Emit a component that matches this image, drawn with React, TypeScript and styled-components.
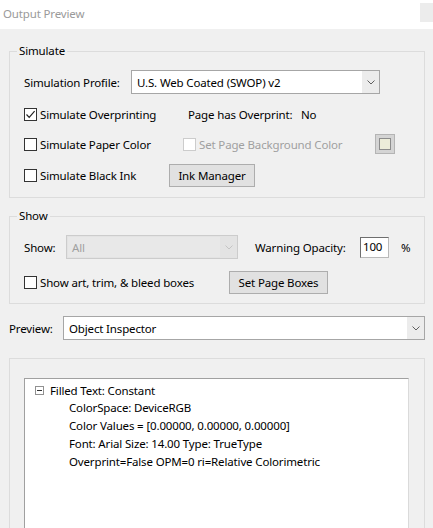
import React from "react";
import styled, { createGlobalStyle } from "styled-components";

const GlobalStyle = createGlobalStyle`
    html, body {
        margin: 0;
        padding: 0;
        background: #f0f0f0;
    }
    body {
        font-family: "Segoe UI", "Noto Sans", "Liberation Sans", sans-serif;
        font-size: 11.5px;
        letter-spacing: -0.15px;
        color: #000;
    }
`;

//SMALL PARTS

function Chevron(props: { disabled?: boolean }): React.ReactElement {
    return (
        <svg width="8" height="5" viewBox="0 0 8 5">
            <path d="M0.5 0.5 L4 4 L7.5 0.5" fill="none" stroke={props.disabled ? "#c4c4c4" : "#606060"} strokeWidth="1" />
        </svg>
    );
}

function CheckBox(props: { checked?: boolean; disabled?: boolean; label: string }): React.ReactElement {
    return (
        <CheckLabel $disabled={props.disabled}>
            <Box $disabled={props.disabled}>
                {props.checked && (
                    <svg width="11" height="11" viewBox="0 0 11 11">
                        <path d="M1.5 5.5 L4.2 8.3 L9.6 2.2" fill="none" stroke="#222" strokeWidth="1.2" />
                    </svg>
                )}
            </Box>
            <span>{props.label}</span>
        </CheckLabel>
    );
}

function Select(props: { value: string; width: number; disabled?: boolean; height?: number }): React.ReactElement {
    return (
        <SelectBox $width={props.width} $disabled={props.disabled} $height={props.height ?? 24}>
            <SelectValue $disabled={props.disabled}>{props.value}</SelectValue>
            <SelectArrow $disabled={props.disabled}>
                <Chevron disabled={props.disabled} />
            </SelectArrow>
        </SelectBox>
    );
}

const treeLines = [
    "ColorSpace: DeviceRGB",
    "Color Values = [0.00000, 0.00000, 0.00000]",
    "Font: Arial Size: 14.00 Type: TrueType",
    "Overprint=False OPM=0 ri=Relative Colorimetric"
];

export default function App(): React.ReactElement {
    return (
        <Window>
            <GlobalStyle />
            <TitleBar>
                <Title>Output Preview</Title>
                <CloseBox />
            </TitleBar>
            <Body>
                <Group $top={14}>
                    <Legend>Simulate</Legend>
                    <GroupInner $gap={10} $bottom={10}>
                        <Row $height={24}>
                            <Label $width={107}>Simulation Profile:</Label>
                            <Select value="U.S. Web Coated (SWOP) v2" width={249} />
                        </Row>
                        <Row $height={20}>
                            <Cell $width={145}>
                                <CheckBox checked label="Simulate Overprinting" />
                            </Cell>
                            <Cell $indent={19} $width={113}>
                                Page has Overprint:
                            </Cell>
                            <Cell>No</Cell>
                        </Row>
                        <Row $height={20}>
                            <Cell $width={145}>
                                <CheckBox label="Simulate Paper Color" />
                            </Cell>
                            <Cell $indent={14} $width={192}>
                                <CheckBox disabled label="Set Page Background Color" />
                            </Cell>
                            <Swatch>
                                <SwatchInner />
                            </Swatch>
                        </Row>
                        <Row $height={23}>
                            <Cell $width={145}>
                                <CheckBox label="Simulate Black Ink" />
                            </Cell>
                            <Button $width={86}>Ink Manager</Button>
                        </Row>
                    </GroupInner>
                </Group>

                <Group $top={10}>
                    <Legend>Show</Legend>
                    <GroupInner $gap={12} $bottom={9}>
                        <Row $height={24}>
                            <Label $width={42}>Show:</Label>
                            <Select value="All" width={172} disabled />
                            <Label $width={105} $indent={17}>
                                Warning Opacity:
                            </Label>
                            <NumberField>100</NumberField>
                            <Cell $indent={12}>%</Cell>
                        </Row>
                        <Row $height={23}>
                            <Cell $width={205}>
                                <CheckBox label="Show art, trim, & bleed boxes" />
                            </Cell>
                            <Button $width={99}>Set Page Boxes</Button>
                        </Row>
                    </GroupInner>
                </Group>

                <PreviewRow>
                    <Label $width={54}>Preview:</Label>
                    <Select value="Object Inspector" width={362} height={24} />
                </PreviewRow>

                <Panel>
                    <TreeBox>
                        <TreeNode>
                            <Toggle>
                                <ToggleBar />
                            </Toggle>
                            <span>Filled Text: Constant</span>
                        </TreeNode>
                        {treeLines.map((line) => (
                            <TreeLeaf key={line}>{line}</TreeLeaf>
                        ))}
                    </TreeBox>
                </Panel>
            </Body>
        </Window>
    );
}

//STYLES

const Window = styled.div`
    width: 433px;
    height: 528px;
    overflow: hidden;
    background: #f0f0f0;
`;

const TitleBar = styled.div`
    height: 29px;
    background: #fff;
    display: flex;
    align-items: center;
    justify-content: space-between;
    padding-left: 3px;
    box-sizing: border-box;
`;

const Title = styled.span`
    color: #9a9a9a;
    margin-top: -2px;
`;

const CloseBox = styled.div`
    width: 13px;
    height: 19px;
    margin-top: -4px;
    background: #ececec;
`;

const Body = styled.div`
    padding: 0 8px 0 9px;
`;

const Group = styled.fieldset<{ $top: number }>`
    margin: ${(p) => p.$top}px 0 0 0;
    padding: 0;
    border: 1px solid #dcdcdc;
    min-width: 0;
`;

const Legend = styled.legend`
    margin-left: 7px;
    padding: 0 2px;
    line-height: 16px;
`;

const GroupInner = styled.div<{ $gap: number; $bottom: number }>`
    display: flex;
    flex-direction: column;
    gap: ${(p) => p.$gap}px;
    padding: 11px 0 ${(p) => p.$bottom}px 14px;
`;

const Row = styled.div<{ $height: number }>`
    display: flex;
    align-items: center;
    height: ${(p) => p.$height}px;
`;

const Cell = styled.div<{ $width?: number; $indent?: number }>`
    display: flex;
    align-items: center;
    flex: none;
    width: ${(p) => (p.$width ? `${p.$width}px` : "auto")};
    margin-left: ${(p) => p.$indent ?? 0}px;
    white-space: nowrap;
`;

const Label = styled(Cell)`
    white-space: nowrap;
`;

const CheckLabel = styled.label<{ $disabled?: boolean }>`
    display: flex;
    align-items: center;
    gap: 3px;
    color: ${(p) => (p.$disabled ? "#a0a0a0" : "#000")};
    white-space: nowrap;
`;

const Box = styled.span<{ $disabled?: boolean }>`
    width: 11px;
    height: 11px;
    border: 1px solid ${(p) => (p.$disabled ? "#cccccc" : "#333333")};
    background: #fff;
    display: flex;
    align-items: center;
    justify-content: center;
`;

const SelectBox = styled.div<{ $width: number; $disabled?: boolean; $height: number }>`
    width: ${(p) => p.$width}px;
    height: ${(p) => p.$height}px;
    box-sizing: border-box;
    border: 1px solid ${(p) => (p.$disabled ? "#cccccc" : "#a6a6a6")};
    background: ${(p) => (p.$disabled ? "#e3e3e3" : "#fff")};
    display: flex;
    flex: none;
`;

const SelectValue = styled.div<{ $disabled?: boolean }>`
    flex: 1;
    display: flex;
    align-items: center;
    padding-left: 4px;
    margin: 1px 0 1px 1px;
    color: ${(p) => (p.$disabled ? "#a0a0a0" : "#000")};
    background: ${(p) => (p.$disabled ? "#e8e8e8" : "#fff")};
    white-space: nowrap;
`;

const SelectArrow = styled.div<{ $disabled?: boolean }>`
    width: 17px;
    display: flex;
    align-items: center;
    justify-content: center;
    background: ${(p) => (p.$disabled ? "#e3e3e3" : "#ececec")};
`;

const Button = styled.div<{ $width: number }>`
    width: ${(p) => p.$width}px;
    height: 23px;
    box-sizing: border-box;
    border: 1px solid #adadad;
    background: #e1e1e1;
    display: flex;
    align-items: center;
    justify-content: center;
    flex: none;
    white-space: nowrap;
`;

const Swatch = styled.div`
    width: 20px;
    height: 20px;
    box-sizing: border-box;
    border: 1px solid #b4b4b4;
    background: #d4d4d4;
    display: flex;
    align-items: center;
    justify-content: center;
`;

const SwatchInner = styled.div`
    width: 10px;
    height: 10px;
    border: 1px solid #8c8c8c;
    background: #ececd9;
`;

const NumberField = styled.div`
    width: 29px;
    height: 21px;
    box-sizing: border-box;
    border: 1px solid #b9b9b9;
    border-top-color: #6e6e6e;
    border-left-color: #6e6e6e;
    background: #fff;
    padding-left: 2px;
    line-height: 17px;
    flex: none;
`;

const PreviewRow = styled.div`
    display: flex;
    align-items: center;
    margin-top: 12px;
    height: 24px;
`;

const Panel = styled.div`
    margin-top: 18px;
    border: 1px solid #dcdcdc;
    padding: 19px 15px 0 14px;
    height: 300px;
`;

const TreeBox = styled.div`
    background: #fff;
    border: 1px solid #a0a0a0;
    border-right-color: #dadada;
    height: 100%;
    box-sizing: border-box;
    padding: 2px 0 0 10px;
`;

const TreeNode = styled.div`
    display: flex;
    align-items: center;
    height: 18px;
    gap: 6px;
`;

const Toggle = styled.span`
    width: 7px;
    height: 7px;
    border: 1px solid #919191;
    display: flex;
    align-items: center;
    justify-content: center;
`;

const ToggleBar = styled.span`
    width: 5px;
    height: 1px;
    background: #333;
`;

const TreeLeaf = styled.div`
    height: 18px;
    line-height: 18px;
    padding-left: 34px;
    white-space: nowrap;
`;
